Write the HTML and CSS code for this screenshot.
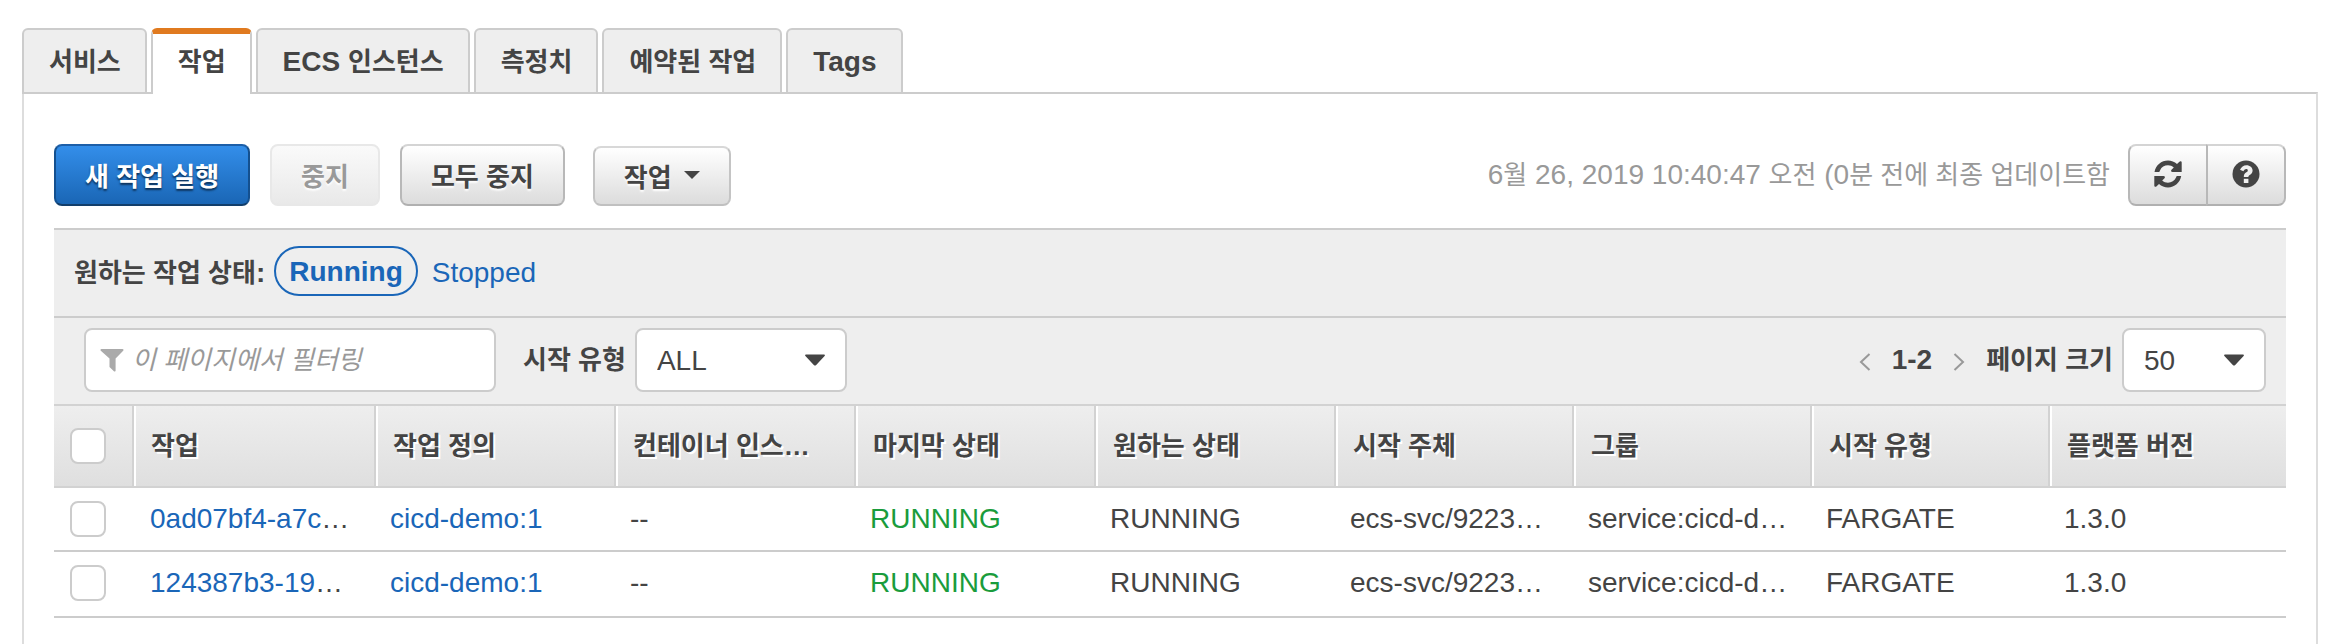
FILE: index.html
```html
<!DOCTYPE html>
<html lang="ko">
<head>
<meta charset="utf-8">
<title>작업</title>
<link rel="stylesheet" href="styles.css">
</head>
<body>
<nav class="tabs">
  <a class="tab ko" href="#">서비스</a>
  <a class="tab tab-active ko" href="#">작업</a>
  <a class="tab" href="#">ECS <span class="ko">인스턴스</span></a>
  <a class="tab ko" href="#">측정치</a>
  <a class="tab ko" href="#">예약된 작업</a>
  <a class="tab" href="#">Tags</a>
</nav>
<main class="panel">
  <div class="toolbar">
    <button class="btn btn-primary ko" type="button">새 작업 실행</button>
    <button class="btn ko" type="button" disabled>중지</button>
    <button class="btn ko" type="button">모두 중지</button>
    <button class="btn btn-menu ko" type="button">작업
      <svg class="menu-caret" viewBox="0 0 16 8" aria-hidden="true"><path d="M0 0h16L8 8z"/></svg>
    </button>
    <p class="updated">6<span class="ko">월</span> 26, 2019 10:40:47 <span class="ko">오전</span> (0<span class="ko">분 전에 최종 업데이트함</span></p>
    <div class="btn-group">
      <button class="btn btn-icon" type="button" aria-label="새로 고침">
        <svg class="icon" viewBox="0 0 28 28" aria-hidden="true">
          <path d="M0.5 12C1.8 5.2 7.4.6 14 .6c3.3 0 6.6 1.3 9 3.5L25.4 1.8c1-1 2.3-.5 2.3.8V12h-9.2c-1.4 0-1.9-1.2-1-2.2l2.3-2.3C18.200 6 16.200 5.300 14 5.300c-3.500 0-6.600 1.900-7.900 4.900L5.300 12z"/>
          <path d="M27.200 16C25.900 22.800 20.600 27.400 14 27.400c-3.300 0-6.600-1.300-9-3.500L2.600 26.200c-1 1-2.300.5-2.300-.8V16h9.200c1.400 0 1.900 1.200 1 2.200l-2.300 2.300c1.600 1.500 3.600 2.200 5.800 2.200 3.500 0 6.600-1.900 7.900-4.900l.8-1.800z"/>
        </svg>
      </button>
      <button class="btn btn-icon" type="button" aria-label="도움말">
        <svg class="icon" viewBox="0 0 28 28" aria-hidden="true">
          <circle cx="14" cy="14" r="13.500"/>
          <path class="icon-cut" d="M8 9.800C9.300 7 11.500 5.200 14.500 5.200c3.400 0 6.100 2.300 6.100 5.300 0 2.300-1.300 3.500-2.900 4.600-1.100.8-1.300 1.100-1.300 1.900h-4.600c0-2.400.5-3.300 2.500-4.700 1.100-.8 1.500-1.100 1.500-1.900s-.7-1.300-1.600-1.300c-1.200 0-1.800.7-2.800 2.200z"/>
          <path class="icon-cut" d="M11.800 18.800h4.600v4.200h-4.600z"/>
        </svg>
      </button>
    </div>
  </div>

  <section class="filters">
    <div class="status-row">
      <span class="field-label"><span class="ko">원하는 작업 상태</span>:</span>
      <a class="status status-active" href="#">Running</a>
      <a class="status" href="#">Stopped</a>
    </div>
    <div class="filter-row">
      <label class="search">
        <svg class="search-icon" viewBox="0 0 24 24" aria-hidden="true"><path d="M1.500 1h21c1 0 1.300 1 .7 1.700L15.600 10.500v12c0 1-1 1.300-1.700.7l-4.400-4.100V10.500L.8 2.700C.2 2 .5 1 1.500 1z"/></svg>
        <input class="search-input ko" type="text" placeholder="이 페이지에서 필터링" aria-label="이 페이지에서 필터링">
      </label>
      <label class="field-label ko" for="launch-type">시작 유형</label>
      <span class="select select-wide">
        <select id="launch-type"><option>ALL</option></select>
        <svg class="select-caret" viewBox="0 0 20 12" aria-hidden="true"><path d="M1 .5h18c1 0 1.200.8.600 1.400L11.200 10.900c-.8.900-1.600.9-2.400 0L.4 1.900C-.2 1.300 0 .5 1 .5z"/></svg>
      </span>
      <div class="pager">
        <button class="pager-step" type="button" aria-label="이전"><svg viewBox="0 0 12 18" aria-hidden="true"><path d="M10.500 1 2 9l8.500 8"/></svg></button>
        <span class="pager-range">1-2</span>
        <button class="pager-step" type="button" aria-label="다음"><svg viewBox="0 0 12 18" aria-hidden="true"><path d="M1.500 1 10 9l-8.500 8"/></svg></button>
        <label class="field-label ko" for="page-size">페이지 크기</label>
        <span class="select">
          <select id="page-size"><option>50</option></select>
          <svg class="select-caret" viewBox="0 0 20 12" aria-hidden="true"><path d="M1 .5h18c1 0 1.200.8.600 1.400L11.200 10.900c-.8.900-1.600.9-2.400 0L.4 1.900C-.2 1.300 0 .5 1 .5z"/></svg>
        </span>
      </div>
    </div>
  </section>

  <table class="tasks">
    <colgroup>
      <col class="col-check"><col class="col-task"><col class="col-mid"><col class="col-mid"><col class="col-mid"><col class="col-mid"><col class="col-end"><col class="col-end"><col class="col-end"><col>
    </colgroup>
    <thead>
      <tr class="ko">
        <th><input class="check" type="checkbox" aria-label="모두 선택"></th>
        <th>작업</th>
        <th>작업 정의</th>
        <th>컨테이너 인스…</th>
        <th>마지막 상태</th>
        <th>원하는 상태</th>
        <th>시작 주체</th>
        <th>그룹</th>
        <th>시작 유형</th>
        <th>플랫폼 버전</th>
      </tr>
    </thead>
    <tbody>
      <tr>
        <td><input class="check" type="checkbox" aria-label="0ad07bf4-a7c"></td>
        <td><a href="#">0ad07bf4-a7c</a>…</td>
        <td><a href="#">cicd-demo:1</a></td>
        <td>--</td>
        <td class="running">RUNNING</td>
        <td>RUNNING</td>
        <td>ecs-svc/9223…</td>
        <td>service:cicd-d…</td>
        <td>FARGATE</td>
        <td>1.3.0</td>
      </tr>
      <tr>
        <td><input class="check" type="checkbox" aria-label="124387b3-19"></td>
        <td><a href="#">124387b3-19</a>…</td>
        <td><a href="#">cicd-demo:1</a></td>
        <td>--</td>
        <td class="running">RUNNING</td>
        <td>RUNNING</td>
        <td>ecs-svc/9223…</td>
        <td>service:cicd-d…</td>
        <td>FARGATE</td>
        <td>1.3.0</td>
      </tr>
    </tbody>
  </table>
</main>
</body>
</html>
```

FILE: styles.css
```css
* {
  box-sizing: border-box;
}

body {
  display: flex;
  flex-direction: column;
  min-height: 100vh;
  margin: 0;
  padding: 28px 26px 0 22px;
  background: #fff;
  color: #444;
  font: 28px/32px "Liberation Sans", "Noto Sans CJK KR", sans-serif;
  white-space: nowrap;
}

.ko {
  font-size: 26px;
}

a {
  color: #1a66b8;
  text-decoration: none;
}

button,
input,
select {
  margin: 0;
  color: inherit;
  font-family: inherit;
}

/* Tabs */

.tabs {
  position: relative;
  display: flex;
  gap: 4px;
  margin-bottom: -2px;
}

.tab {
  height: 66px;
  padding: 16px 24px 0 25px;
  border: 2px solid #ccc;
  border-radius: 6px 6px 0 0;
  background: #eee;
  color: #444;
  font-weight: bold;
}

.tab-active {
  padding-top: 12px;
  border-top: 6px solid #e07a1f;
  border-bottom: 0;
  background: #fff;
}

.panel {
  flex: 1;
  padding: 50px 30px 0;
  border: 2px solid #ddd;
  border-top-color: #ccc;
  border-bottom: 0;
}

/* Toolbar */

.toolbar {
  display: flex;
  align-items: flex-end;
  gap: 20px;
  margin-bottom: 22px;
}

.btn {
  height: 62px;
  padding: 0 29px 2px;
  border: 2px solid #bbb;
  border-color: #d4d4d4 #b8b8b8 #b0b0b0;
  border-radius: 8px;
  background: linear-gradient(#fff, #dcdcdc);
  font-weight: bold;
  text-shadow: 0 2px 2px #fff;
}

.btn-primary {
  border-color: #1d5fa8 #14508f #123e6b;
  background: linear-gradient(#338eea, #1a66b5);
  color: #fff;
  text-shadow: 0 2px 2px #0c2f55;
}

.btn:disabled {
  border-color: #e8e8e8;
  background: linear-gradient(#fafafa, #e9e9e9);
  color: #999;
}

.btn-menu {
  display: flex;
  align-items: center;
  gap: 12px;
  height: 60px;
  margin-left: 8px;
  border-color: #d8d8d8 #c4c4c4 #c0c0c0;
}

.menu-caret {
  width: 16px;
  height: 8px;
  fill: #444;
}

.updated {
  margin: 0 -2px 0 auto;
  align-self: center;
  color: #999;
}

.btn-group {
  display: flex;
}

.btn-icon {
  display: flex;
  align-items: center;
  justify-content: center;
  width: 80px;
  padding: 0 0 2px;
}

.btn-icon:first-child {
  border-radius: 8px 0 0 8px;
}

.btn-icon:last-child {
  margin-left: -2px;
  border-radius: 0 8px 8px 0;
}

.icon {
  width: 28px;
  height: 28px;
  fill: #444;
}

.icon-cut {
  fill: #f0f0f0;
}

/* Filters */

.filters {
  border-top: 2px solid #ccc;
  background: #eee;
}

.status-row,
.filter-row {
  display: flex;
  align-items: center;
}

.status-row {
  gap: 9px;
  padding: 16px 20px 20px;
}

.field-label {
  font-weight: bold;
}

.status-row .field-label {
  padding-top: 4px;
}

.status {
  padding: 11px 5px 7px;
}

.status-active {
  padding: 8px 13px 6px;
  border: 2px solid #1a66b8;
  border-radius: 25px;
  font-weight: bold;
}

.filter-row {
  gap: 9px;
  padding: 10px 20px 12px 30px;
  border-top: 2px solid #ccc;
}

.search {
  display: flex;
  align-items: center;
  gap: 8px;
  width: 412px;
  height: 64px;
  margin-right: 18px;
  padding: 0 14px;
  border: 2px solid #ccc;
  border-radius: 8px;
  background: #fff;
}

.search-icon {
  flex: none;
  width: 24px;
  height: 24px;
  fill: #aaa;
}

.search-input {
  flex: 1;
  min-width: 0;
  padding: 0;
  border: 0;
  outline: 0;
  background: none;
}

.search-input::placeholder {
  color: #999;
  font-style: italic;
  opacity: 1;
}

.select {
  display: grid;
  align-items: center;
  width: 144px;
}

.select-wide {
  width: 212px;
}

.select select {
  grid-area: 1 / 1;
  width: 100%;
  height: 64px;
  padding: 0 20px;
  border: 2px solid #ccc;
  border-radius: 8px;
  background: #fff;
  font-size: 28px;
  appearance: none;
}

.select-caret {
  grid-area: 1 / 1;
  justify-self: end;
  width: 20px;
  height: 12px;
  margin-right: 22px;
  fill: #444;
  pointer-events: none;
}

.pager {
  display: flex;
  align-items: center;
  gap: 9px;
  margin-left: auto;
}

.pager-step {
  padding: 4px 12px 0;
  border: 0;
  background: none;
}

.pager-step svg {
  display: block;
  width: 12px;
  height: 18px;
  fill: none;
  stroke: #999;
  stroke-width: 2;
}

.pager-range {
  font-weight: bold;
}

/* Task table */

.tasks {
  width: 100%;
  table-layout: fixed;
  border-collapse: separate;
  border-spacing: 0;
  border-top: 2px solid #d2d2d2;
}

.col-check {
  width: 80px;
}

.col-task {
  width: 242px;
}

.col-mid {
  width: 240px;
}

.col-end {
  width: 238px;
}

th,
td {
  overflow: hidden;
  padding: 0 8px 0 14px;
  text-align: left;
}

th {
  height: 82px;
  padding-left: 17px;
  border-right: 2px solid #d2d2d2;
  border-bottom: 2px solid #d2d2d2;
  background: linear-gradient(#eee, #dfdfdf);
  box-shadow: inset 2px 0 #fff;
  text-shadow: 2px 2px #fff;
}

th:first-child {
  box-shadow: none;
}

th:last-child {
  border-right: 0;
}

td {
  height: 64px;
  border-bottom: 2px solid #ccc;
}

td:nth-child(2) {
  padding-left: 16px;
}

tbody tr:last-child td {
  height: 66px;
  padding-bottom: 2px;
}

th:first-child,
td:first-child {
  padding: 0 16px;
}

.check {
  display: block;
  width: 36px;
  height: 36px;
  border: 2px solid #ccc;
  border-radius: 8px;
  background: #fff;
  appearance: none;
}

.running {
  color: #1a9c3c;
}
```
